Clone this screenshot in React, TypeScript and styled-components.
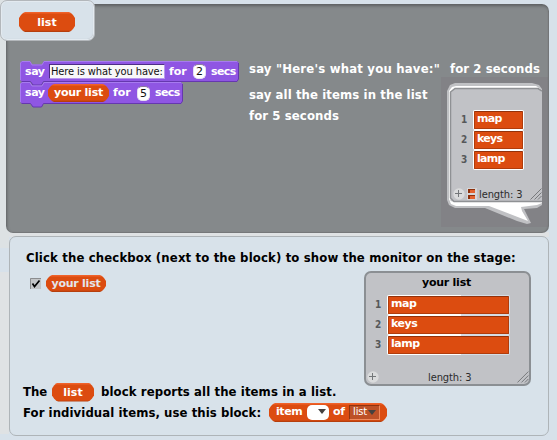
import React from "react";
import styled, { createGlobalStyle } from "styled-components";

const CONDENSED = '"DejaVu Sans Condensed", "DejaVu Sans", sans-serif';
const WIDE = '"DejaVu Sans", Verdana, sans-serif';

const GlobalStyle = createGlobalStyle`
  *, *::before, *::after { box-sizing: border-box; }
  body { margin: 0; background: #d7e0e9; }
`;

const Page = styled.main`
  width: 557px;
  height: 440px;
  overflow: hidden;
  position: relative;
  padding-top: 4px;
  background:
    linear-gradient(#dde2e4 0 248px, #d7e1ea 248px 272px, #dfe2e4 272px 434px, #d7e1ea 434px) 0 0 / 9px 100% no-repeat,
    linear-gradient(#dfe2e4, #dfe2e4) 0 232px / 549px 5px no-repeat,
    #d7e1ea;
  font-family: ${CONDENSED};
`;

const Stage = styled.section`
  display: flex;
  width: 543px;
  height: 229px;
  margin-left: 6px;
  border-radius: 7px;
  background:
    linear-gradient(#828286, #828286) 435px 73px / 107px 150px no-repeat,
    #85898b;
  box-shadow: inset 1px 2px 3px #5e6062, inset -1px -1px 1px #77797b;
`;

const Tab = styled.header`
  position: absolute;
  left: 0;
  top: 0;
  width: 95px;
  height: 41px;
  display: flex;
  padding: 11px 0 0 18px;
  border: 1px solid #b3b7bb;
  border-radius: 7px;
  background: #d8e2ea;
  box-shadow: inset 0 0 0 1px #e3eaf0, inset -1px -1px 1px #bfc6cb;
`;

const Pill = styled.span<{ $w: number; $h: number; $tint?: string; $size?: number; $gap?: number; $lift?: number }>`
  flex: none;
  display: inline-flex;
  align-items: center;
  justify-content: center;
  width: ${(p) => p.$w}px;
  height: ${(p) => p.$h}px;
  padding-bottom: ${(p) => p.$lift ?? 1}px;
  color: ${(p) => p.$tint ?? "#fff"};
  font: 700 ${(p) => p.$size ?? 11}px/1 ${WIDE};
  letter-spacing: ${(p) => p.$gap ?? -0.25}px;
  white-space: nowrap;
  background: linear-gradient(#f0622a 0 1px, #dc4c10 2px calc(100% - 2px), #a93a0c 100%);
  clip-path: polygon(
    0 6px, 2px 3px, 4px 1px, 6px 0,
    calc(100% - 6px) 0, calc(100% - 4px) 1px, calc(100% - 2px) 3px, 100% 6px,
    100% calc(100% - 6px), calc(100% - 2px) calc(100% - 3px), calc(100% - 4px) calc(100% - 1px), calc(100% - 6px) 100%,
    6px 100%, 4px calc(100% - 1px), 2px calc(100% - 3px), 0 calc(100% - 6px)
  );
`;

const Scripts = styled.div`
  width: 229px;
  margin: 57px 0 0 14px;
`;

const BlockRow = styled.div<{ $w: number; $h: number }>`
  position: relative;
  display: flex;
  align-items: center;
  width: ${(p) => p.$w}px;
  height: ${(p) => p.$h}px;
  padding: 0 0 0 5px;
`;

const BlockShape = styled.svg`
  position: absolute;
  left: 0;
  top: 0;
  overflow: visible;
`;

const Word = styled.span<{ $w: number; $gap?: number }>`
  position: relative;
  flex: none;
  width: ${(p) => p.$w}px;
  color: #fff;
  font: 700 11px/20px ${WIDE};
  letter-spacing: ${(p) => p.$gap ?? -0.4}px;
  white-space: nowrap;
`;

const TextInput = styled.span`
  position: relative;
  flex: none;
  width: 116px;
  height: 15px;
  margin-right: 4px;
  padding-left: 1px;
  border: 1px solid #4d2d86;
  border-right-color: #b796ef;
  border-bottom-color: #b796ef;
  background: #f8f7f9;
  color: #111;
  font: 400 11px/14px ${CONDENSED};
  letter-spacing: -0.1px;
  white-space: nowrap;
`;

const NumberInput = styled.span`
  position: relative;
  flex: none;
  width: 13px;
  height: 15px;
  margin-right: 5px;
  border-radius: 5px;
  border: 1px solid #e6e0f2;
  border-top-color: #8a7a9f;
  background: #fff;
  color: #111;
  text-align: center;
  font: 400 11px/14px ${WIDE};
`;

const Nested = styled.span`
  position: relative;
  display: flex;
  margin-right: 4px;
`;

const Notes = styled.div`
  flex: 1;
  margin-top: 55px;
`;

const Text = styled.p<{ $gap?: number; $dark?: boolean; $lh?: number }>`
  margin: 0;
  color: ${(p) => (p.$dark ? "#000" : "#fff")};
  font: 700 13px/${(p) => p.$lh ?? 20}px ${CONDENSED};
  letter-spacing: ${(p) => p.$gap ?? 0.1}px;
  white-space: nowrap;
`;

const FirstNote = styled.div`
  display: flex;
  justify-content: space-between;
  width: 291px;
  margin-bottom: 4px;
`;

const NoteRow = styled.div`
  display: flex;
`;

const NoteLines = styled.div`
  width: 198px;
  padding-top: 1px;
`;

const Bubble = styled.div`
  position: relative;
  width: 96px;
  height: 142px;
  padding-top: 27px;
`;

const BubbleShape = styled.svg`
  position: absolute;
  left: 0;
  top: 0;
`;

const ItemRow = styled.div<{ $indent: number }>`
  position: relative;
  display: flex;
  height: 20px;
  padding-left: ${(p) => p.$indent}px;
`;

const Index = styled.span`
  width: 12px;
  color: #56585a;
  font: 700 10px/19px ${CONDENSED};
`;

const Cell = styled.span<{ $w: number; $fade?: boolean }>`
  display: flex;
  width: ${(p) => p.$w}px;
  height: 20px;
  padding: 1px;
  border-radius: 2px;
  background: ${(p) => (p.$fade ? "linear-gradient(90deg, #fff 60%, #d5dde6 60%)" : "#fff")};
`;

const CellText = styled.span<{ $gap: number }>`
  flex: 1;
  padding-left: 2px;
  border: 1px solid #b13c0b;
  border-top-color: #94320a;
  border-radius: 1px;
  background: #dc4c10;
  color: #fff;
  font: 700 11px/14px ${WIDE};
  letter-spacing: ${(p) => p.$gap}px;
`;

const Footer = styled.div<{ $top: number }>`
  position: relative;
  display: flex;
  align-items: center;
  height: 13px;
  margin-top: ${(p) => p.$top}px;
`;

const Length = styled.span<{ $left: number; $w: number }>`
  width: ${(p) => p.$w}px;
  height: 13px;
  margin-left: ${(p) => p.$left}px;
  color: #2b2b2c;
  font: 400 11px/15px ${CONDENSED};
  letter-spacing: -0.1px;
  white-space: nowrap;
`;

const MiniList = styled.svg`
  margin-left: 2px;
`;

const PlusIcon = styled.svg<{ $left: number }>`
  flex: none;
  margin-left: ${(p) => p.$left}px;
`;

const Help = styled.section`
  width: 540px;
  height: 200px;
  margin: 3px 0 0 9px;
  padding: 11px 0 0 0;
  border: 1px solid #aeb4b8;
  border-radius: 7px;
  background: #d8e2ea;
`;

const Heading = styled.div`
  padding-left: 16px;
`;

const HelpBody = styled.div`
  display: flex;
  height: 134px;
`;

const HelpLeft = styled.div`
  display: flex;
  flex-direction: column;
  justify-content: space-between;
  width: 354px;
`;

const CheckRow = styled.div`
  display: flex;
  align-items: center;
  gap: 5px;
  padding: 7px 0 0 20px;
`;

const Sentence = styled.div<{ $h?: number }>`
  display: flex;
  align-items: center;
  height: ${(p) => p.$h ?? 20}px;
  padding-left: 13px;
`;

const SentenceStart = styled.div<{ $w: number }>`
  width: ${(p) => p.$w}px;
`;

const SentenceRest = styled.div`
  margin-left: 7px;
`;

const Monitor = styled.aside`
  width: 167px;
  height: 115px;
  margin-top: 3px;
  border: 2px solid #8b8f93;
  border-radius: 7px;
  background: #c1c2c6;
`;

const MonitorTitle = styled.h2`
  margin: 0 0 3px;
  padding-right: 2px;
  color: #000;
  text-align: center;
  font: 700 11px/19px ${WIDE};
  letter-spacing: -0.25px;
`;

const Slot = styled.span`
  display: flex;
  align-items: flex-start;
  justify-content: flex-end;
  width: 22px;
  height: 15px;
  margin-right: 4px;
  padding: 4px 3px 0 0;
  border-radius: 5px;
  background: #fff;
`;

const Dropdown = styled.span`
  display: flex;
  align-items: center;
  justify-content: space-between;
  width: 31px;
  height: 15px;
  padding: 0 3px;
  border: 1px solid #8f3410;
  border-right-color: #f08a5c;
  border-bottom-color: #f08a5c;
  background: #bd5127;
  color: #fff;
  font: 400 11px/12px ${CONDENSED};
  letter-spacing: -0.1px;
`;

const ArrowIcon = styled.svg`
  flex: none;
`;

const Arrow = () => (
  <ArrowIcon width="8" height="5" viewBox="0 0 8 5">
    <path d="M0 0H8L4 5Z" fill="#45413f" />
  </ArrowIcon>
);

const Plus = ({ left }: { left: number }) => (
  <PlusIcon $left={left} width="12" height="12" viewBox="0 0 12 12">
    <circle cx="6" cy="6" r="5.7" fill="#dadbdc" />
    <path d="M5.5 2V9M2 5.5H9" stroke="#74777a" strokeWidth="1" />
  </PlusIcon>
);

const Grip = () => (
  <svg width="12" height="12" viewBox="0 0 12 12">
    <path d="M0.5 11.5L11.5 0.5M4.5 11.5L11.5 4.5M8 11.5L11.5 8" stroke="#77797c" fill="none" />
  </svg>
);

const Shape = ({ w, h }: { w: number; h: number }) => (
  <BlockShape width={w} height={h + 5}>
    <path
      d={`M0 2L2 0H10L12 3.5H22L24 0H${w - 2}L${w} 2V${h - 3}L${w - 2} ${h - 0.5}H23.5L21.5 ${h + 3}H13L10.5 ${h - 0.5}H2L0 ${h - 2}Z`}
      fill="#8f56e3"
    />
    <path d={`M0.5 ${h - 2}V2L2 0.5H10L12 4H22L24 0.5H${w - 2}`} fill="none" stroke="#a77bf0" />
    <path
      d={`M1.5 ${h - 0.5}H10.5L13 ${h + 3}H21.5L23.5 ${h - 0.5}H${w - 2}L${w - 0.5} ${h - 3}V2`}
      fill="none"
      stroke="#6538ae"
    />
  </BlockShape>
);

const ITEMS = ["map", "keys", "lamp"];

const ItemList = ({ indent, width, gap, fade }: { indent: number; width: number; gap: number; fade?: boolean }) => (
  <>
    {ITEMS.map((item, i) => (
      <ItemRow key={item} $indent={indent}>
        <Index>{i + 1}</Index>
        <Cell $w={width} $fade={fade}>
          <CellText $gap={gap}>{item}</CellText>
        </Cell>
      </ItemRow>
    ))}
  </>
);

export default function App() {
  return (
    <Page>
      <GlobalStyle />
      <Stage>
        <Scripts>
          <BlockRow $w={219} $h={21}>
            <Shape w={219} h={21} />
            <Word $w={24}>say</Word>
            <TextInput>Here is what you have:</TextInput>
            <Word $w={24} $gap={0}>for</Word>
            <NumberInput>2</NumberInput>
            <Word $w={26} $gap={-0.6}>secs</Word>
          </BlockRow>
          <BlockRow $w={163} $h={22}>
            <Shape w={163} h={22} />
            <Word $w={23}>say</Word>
            <Nested>
              <Pill $w={61} $h={18}>your list</Pill>
            </Nested>
            <Word $w={24} $gap={0}>for</Word>
            <NumberInput>5</NumberInput>
            <Word $w={26} $gap={-0.6}>secs</Word>
          </BlockRow>
        </Scripts>
        <Notes>
          <FirstNote>
            <Text $gap={0.2}>say "Here's what you have:"</Text>
            <Text>for 2 seconds</Text>
          </FirstNote>
          <NoteRow>
            <NoteLines>
              <Text $lh={21}>say all the items in the list</Text>
              <Text $lh={21}>for 5 seconds</Text>
            </NoteLines>
            <Bubble>
              <BubbleShape width="96" height="142" viewBox="0 0 96 142">
                <path d="M0 8L3 2L8 0H85L92 2L95 6V122L90 125L77 126L84 140L80 141L70 138L38 125H8L2 122L0 117Z" fill="#c0c1c4" />
                <path d="M2 8L5 4L9 3H89L95 7V120L90 122L74 124L75 128L81 138L42 123H9L4 121L2 116Z" fill="#fff" />
                <path d="M3.5 118V9L8 5.5H91L95 8V119H8Z" fill="#c1c2c6" />
                <path d="M95 8L91 5.5H8L3.5 9V115L7 118.5H95" fill="none" stroke="#8f9194" strokeWidth="1.5" />
              </BubbleShape>
              <ItemList indent={14} width={51} gap={-0.7} />
              <Footer $top={17}>
                <Plus left={6} />
                <MiniList width="10" height="12" viewBox="0 0 10 12">
                  <path d="M0 0H10V12H0Z" fill="#d6d6d8" />
                  <path d="M1 1H8V5H1ZM1 7H8V11H1Z" fill="#8d300b" />
                  <path d="M3 2H8V5H3ZM3 8H8V11H3Z" fill="#e4622d" />
                </MiniList>
                <Length $left={2} $w={51}>length: 3</Length>
                <Grip />
              </Footer>
            </Bubble>
          </NoteRow>
        </Notes>
      </Stage>
      <Help>
        <Heading>
          <Text $dark $gap={0.14}>
            Click the checkbox (next to the block) to show the monitor on the stage:
          </Text>
        </Heading>
        <HelpBody>
          <HelpLeft>
            <CheckRow>
              <svg width="11" height="11" viewBox="0 0 11 11">
                <path d="M0 0H11V11H0Z" fill="#c3c5c7" />
                <path d="M0.5 11V0.5H11" fill="none" stroke="#8b8d8f" />
                <path d="M2.5 5.5L4.5 8.5L9.5 2.5" fill="none" stroke="#000" strokeWidth="1.7" />
              </svg>
              <Pill $w={60} $h={17} $tint="#e3e6ec" $lift={0}>your list</Pill>
            </CheckRow>
            <Sentence>
              <SentenceStart $w={29}>
                <Text $dark $gap={0}>The</Text>
              </SentenceStart>
              <Pill $w={42} $h={19} $gap={0} $lift={0}>list</Pill>
              <SentenceRest>
                <Text $dark>block reports all the items in a list.</Text>
              </SentenceRest>
            </Sentence>
          </HelpLeft>
          <Monitor>
            <MonitorTitle>your list</MonitorTitle>
            <ItemList indent={9} width={123} gap={-0.5} fade />
            <Footer $top={15}>
              <Plus left={1} />
              <Length $left={49} $w={90}>length: 3</Length>
              <Grip />
            </Footer>
          </Monitor>
        </HelpBody>
        <Sentence $h={21}>
          <SentenceStart $w={246}>
            <Text $dark $gap={0.07}>For individual items, use this block:</Text>
          </SentenceStart>
          <Pill $w={118} $h={19}>
            <Word $w={31}>item</Word>
            <Slot><Arrow /></Slot>
            <Word $w={16}>of</Word>
            <Dropdown>list<Arrow /></Dropdown>
          </Pill>
        </Sentence>
      </Help>
      <Tab>
        <Pill $w={56} $h={20} $gap={0} $lift={0}>list</Pill>
      </Tab>
    </Page>
  );
}
